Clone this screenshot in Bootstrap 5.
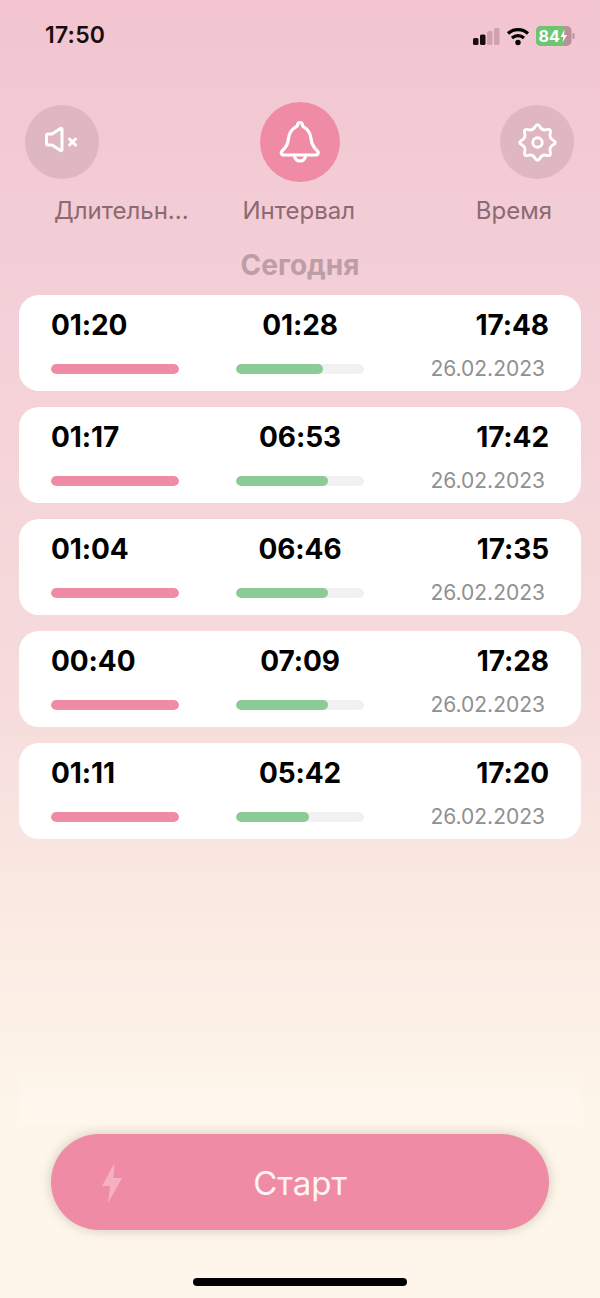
<!DOCTYPE html>
<html lang="ru">
<head>
<meta charset="utf-8">
<title>Интервал</title>
<link href="https://cdn.jsdelivr.net/npm/bootstrap@5.3.0/dist/css/bootstrap.min.css" rel="stylesheet">
<style>
html,body{height:1298px;margin:0;overflow:hidden}
body{font-family:Inter,Roboto,"Liberation Sans",sans-serif;background:linear-gradient(180deg,#f2c5d0 0,#f3cdd6 230px,#f6dcdc 700px,#fbece4 950px,#fef6ea 1120px,#fef6ea 100%);color:#000}
.screen{height:1298px}
.sbar{height:52px;padding:0 24px 0 45px}
.sclock{font-size:23px;font-weight:600;line-height:1;letter-spacing:.2px;color:#1a0d10;padding-bottom:5px}
.sicons{margin-bottom:5px}
.top-row{height:130px;padding:0 26px 0 25px;margin-top:50px}
.mode{width:74px;position:relative;height:130px}
.mode-wide{width:80px}
.disc{width:74px;height:74px;border-radius:50%;background:#dfb7c0;margin-top:3px}
.disc-on{width:80px;height:80px;background:#f08ba5;margin-top:0}
.mode-label{position:absolute;top:94px;font-size:24px;line-height:30px;white-space:nowrap;color:#8b6a72}
.lab-a{left:29px}.lab-b{left:-17px}.lab-c{right:22px}
.day-title{font-size:28px;font-weight:700;line-height:34px;color:#bd9da6;text-align:center;margin-top:16px;margin-bottom:13px}
.rows{padding:0 19px;gap:16px}
.rec{height:96px;background:#fff;border-radius:20px;padding:14px 32px 0}
.tm{font-size:28px;font-weight:700;line-height:32px;color:#000;letter-spacing:-.1px}
.low{margin-top:17px;height:22px}
.meter{width:128px;height:10px;border-radius:5px;background:#f1f1f1;overflow:hidden}
.fill-p{background:#f08ba5;height:100%;border-radius:5px}
.fill-g{background:#8ccb95;height:100%;border-radius:5px}
.dt{font-size:21px;line-height:22px;color:#909090;padding-right:4px;font-weight:400}
.foot{position:relative;padding:0 51px}
.foot::before{content:"";position:absolute;left:18px;right:18px;top:-84px;height:75px;background:linear-gradient(180deg,rgba(255,248,238,0),rgba(255,248,238,.75))}
.go{height:96px;border-radius:48px;background:#f08ba5;box-shadow:0 0 12px rgba(120,110,90,.35);color:#fff6f4;font-size:33px;position:relative;padding-top:3px}
.bolt{position:absolute;left:51px;top:29px}
.home{width:214px;height:8px;border-radius:4px;background:#000;margin:48px auto 0}
</style>
</head>
<body>
<div class="screen d-flex flex-column">
  <div class="sbar d-flex align-items-end justify-content-between">
    <div class="sclock">17:50</div>
    <svg class="sicons" width="104" height="22" viewBox="0 0 104 22" aria-label="status">
      <rect x="1" y="13" width="5.500" height="7" rx="1.500" fill="#1a0d10"/>
      <rect x="8" y="9.500" width="5.500" height="10.500" rx="1.500" fill="#1a0d10"/>
      <rect x="15" y="6" width="5.500" height="14" rx="1.500" fill="#cfa3ad"/>
      <rect x="22" y="3" width="5.500" height="17" rx="1.500" fill="#cfa3ad"/>
      <g fill="none" stroke="#000" stroke-width="3.200">
        <path d="M36 8.500 A15 15 0 0 1 56 8.500"/>
        <path d="M40 13 A9 9 0 0 1 52 13"/>
      </g>
      <circle cx="46" cy="17.500" r="2.700" fill="#000"/>
      <rect x="64" y="1" width="35.500" height="20" rx="5" fill="#b99098"/>
      <path d="M69 1h23v20H69a5 5 0 0 1-5-5V6a5 5 0 0 1 5-5z" fill="#6cc573"/>
      <rect x="100.500" y="8" width="2" height="6" rx="1" fill="#b99098"/>
      <text x="66.500" y="17" font-family="Inter,sans-serif" font-size="16" font-weight="700" fill="#fff">84</text>
      <path d="M92.500 4.500l-4 7.500h3l-1 5.500 4.500-7.500h-3z" fill="#fff"/>
    </svg>
  </div>

  <div class="top-row d-flex justify-content-between align-items-start">
    <div class="mode">
      <div class="disc d-flex align-items-center justify-content-center">
        <svg width="40" height="40" viewBox="0 0 40 40" fill="none" stroke="#fff" stroke-width="3" stroke-linejoin="round" stroke-linecap="round">
          <path d="M6 12h4L18.500 6.500a1 1 0 0 1 1.500.8v20.400a1 1 0 0 1-1.500.8L10 23H6a1.500 1.500 0 0 1-1.500-1.500v-8A1.500 1.500 0 0 1 6 12z"/>
          <path d="M27.500 17l6 6M33.500 17l-6 6"/>
        </svg>
      </div>
      <div class="mode-label lab-a">Длительн...</div>
    </div>
    <div class="mode mode-wide">
      <div class="disc disc-on d-flex align-items-center justify-content-center">
        <svg width="44" height="50" viewBox="0 0 44 50" fill="none" stroke="#fff" stroke-width="3.200" stroke-linejoin="round" stroke-linecap="round">
          <path d="M19.500 8.500c0-4 5-4 5 0 0 .8 1 1.200 1.800 1.800 4.200 2.600 6.200 6.500 6.700 11.200.6 5.500 2 8.500 6 12 2 2 1.200 4.500-1.500 4.500H6c-2.700 0-3.500-2.500-1.500-4.500 4-3.500 5.400-6.500 6-12 .5-4.700 2.500-8.600 6.700-11.200.8-.6 2.300-1 2.300-1.800z"/>
          <path d="M16.500 38c0 3.500 2.200 6 5.500 6s5.500-2.500 5.500-6"/>
        </svg>
      </div>
      <div class="mode-label lab-b">Интервал</div>
    </div>
    <div class="mode">
      <div class="disc d-flex align-items-center justify-content-center">
        <svg width="39" height="39" viewBox="-20.500 -20.500 41 41" fill="none" stroke="#fff" stroke-width="3" stroke-linejoin="round">
          <circle r="5"/>
          <path d="M-2.490-16.500Q0-21 2.490-16.500Q4.970-12.010 9.910-13.430Q14.850-14.850 13.430-9.910Q12.010-4.970 16.500-2.490Q21 0 16.500 2.490Q12.010 4.970 13.430 9.910Q14.850 14.850 9.910 13.430Q4.970 12.010 2.490 16.500Q0 21-2.490 16.500Q-4.970 12.010-9.910 13.430Q-14.850 14.850-13.430 9.910Q-12.010 4.970-16.500 2.490Q-21 0-16.500-2.490Q-12.010-4.970-13.430-9.910Q-14.850-14.850-9.910-13.430Q-4.970-12.010-2.490-16.500Z"/>
        </svg>
      </div>
      <div class="mode-label lab-c">Время</div>
    </div>
  </div>

  <div class="day-title">Сегодня</div>

  <div class="rows d-flex flex-column">
    <div class="rec">
      <div class="row g-0 tm"><div class="col-4">01:20</div><div class="col-4 text-center">01:28</div><div class="col-4 text-end">17:48</div></div>
      <div class="row g-0 low align-items-center">
        <div class="col-4"><div class="meter"><div class="fill-p w-100"></div></div></div>
        <div class="col-4 d-flex justify-content-center"><div class="meter"><div class="fill-g" style="width:68%"></div></div></div>
        <div class="col-4 text-end dt">26.02.2023</div>
      </div>
    </div>
    <div class="rec">
      <div class="row g-0 tm"><div class="col-4">01:17</div><div class="col-4 text-center">06:53</div><div class="col-4 text-end">17:42</div></div>
      <div class="row g-0 low align-items-center">
        <div class="col-4"><div class="meter"><div class="fill-p w-100"></div></div></div>
        <div class="col-4 d-flex justify-content-center"><div class="meter"><div class="fill-g" style="width:72%"></div></div></div>
        <div class="col-4 text-end dt">26.02.2023</div>
      </div>
    </div>
    <div class="rec">
      <div class="row g-0 tm"><div class="col-4">01:04</div><div class="col-4 text-center">06:46</div><div class="col-4 text-end">17:35</div></div>
      <div class="row g-0 low align-items-center">
        <div class="col-4"><div class="meter"><div class="fill-p w-100"></div></div></div>
        <div class="col-4 d-flex justify-content-center"><div class="meter"><div class="fill-g" style="width:72%"></div></div></div>
        <div class="col-4 text-end dt">26.02.2023</div>
      </div>
    </div>
    <div class="rec">
      <div class="row g-0 tm"><div class="col-4">00:40</div><div class="col-4 text-center">07:09</div><div class="col-4 text-end">17:28</div></div>
      <div class="row g-0 low align-items-center">
        <div class="col-4"><div class="meter"><div class="fill-p w-100"></div></div></div>
        <div class="col-4 d-flex justify-content-center"><div class="meter"><div class="fill-g" style="width:72%"></div></div></div>
        <div class="col-4 text-end dt">26.02.2023</div>
      </div>
    </div>
    <div class="rec">
      <div class="row g-0 tm"><div class="col-4">01:11</div><div class="col-4 text-center">05:42</div><div class="col-4 text-end">17:20</div></div>
      <div class="row g-0 low align-items-center">
        <div class="col-4"><div class="meter"><div class="fill-p w-100"></div></div></div>
        <div class="col-4 d-flex justify-content-center"><div class="meter"><div class="fill-g" style="width:57%"></div></div></div>
        <div class="col-4 text-end dt">26.02.2023</div>
      </div>
    </div>
  </div>

  <div class="flex-grow-1"></div>

  <div class="foot">
    <div class="go d-flex align-items-center justify-content-center">
      <svg class="bolt" width="20" height="40" viewBox="0 0 20 40"><path d="M12.500 0L0 23h8l-2 17L20 15h-8.500z" fill="#f5b0c2"/></svg>
      <span>Старт</span>
    </div>
    <div class="home"></div>
  </div>
  <div style="height:12px"></div>
</div>
</body>
</html>
